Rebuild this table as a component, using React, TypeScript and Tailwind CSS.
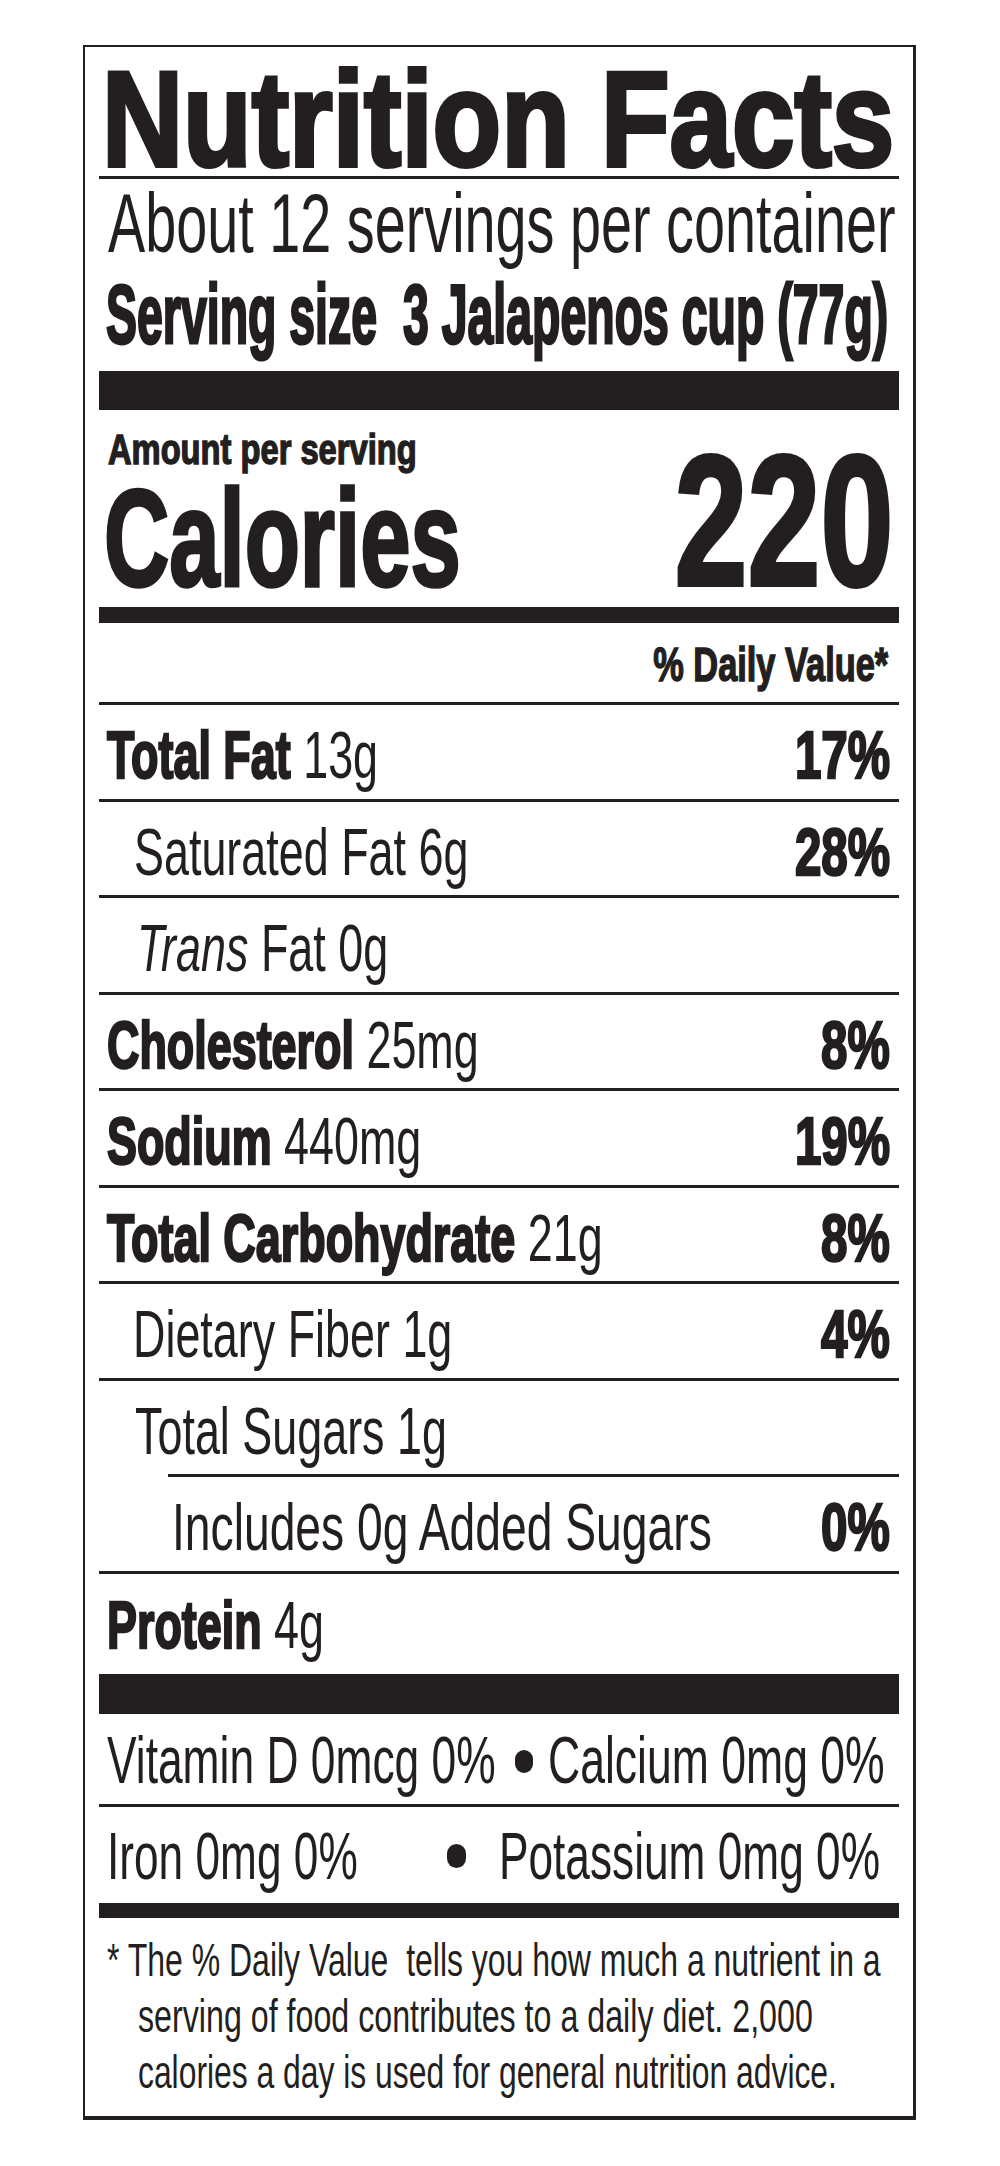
import React from "react";

type Row = {
  b?: string;
  r?: string;
  it?: boolean;
  p?: string;
  pad: string;
  wide?: boolean;
  ruleIndent?: boolean;
};

const rows: Row[] = [
  { b: "Total Fat", r: "13g", p: "17%", pad: "pl-[8px]" },
  { r: "Saturated Fat 6g", p: "28%", pad: "pl-[35px]" },
  { it: true, r: "Fat 0g", pad: "pl-[38px]" },
  { b: "Cholesterol", r: "25mg", p: "8%", pad: "pl-[8px]" },
  { b: "Sodium", r: "440mg", p: "19%", pad: "pl-[8px]" },
  { b: "Total Carbohydrate", r: "21g", p: "8%", pad: "pl-[8px]" },
  { r: "Dietary Fiber 1g", p: "4%", pad: "pl-[34px]" },
  { r: "Total Sugars 1g", pad: "pl-[36px]", ruleIndent: true },
  { r: "Includes 0g Added Sugars", p: "0%", pad: "pl-[73px]", wide: true },
];

function NutrientRow({ row }: { row: Row }) {
  return (
    <>
      <div
        className={`flex h-[93.5px] justify-between pt-[26px] pr-[9px] text-[67px] leading-[48px] ${row.pad}`}
      >
        <div className="min-w-0 flex-1 whitespace-nowrap">
          <span
            className={`inline-block origin-left ${row.wide ? "scale-x-[0.69]" : "scale-x-[0.67]"}`}
          >
            {row.b && (
              <span className="font-bold [-webkit-text-stroke:2.5px_#231f20]">{row.b}&nbsp;</span>
            )}
            {row.it && <span className="italic">Trans </span>}
            {row.r}
          </span>
        </div>
        {row.p && (
          <span className="inline-block shrink-0 origin-right scale-x-[0.71] whitespace-nowrap font-bold [-webkit-text-stroke:2.5px_#231f20]">
            {row.p}
          </span>
        )}
      </div>
      <div className={`h-[3px] bg-[#231f20] ${row.ruleIndent ? "ml-[69px]" : ""}`} />
    </>
  );
}

export default function App() {
  return (
    <div className="min-h-[2166px] w-[1000px] overflow-hidden bg-white pl-[83px] pt-[45px] font-['Liberation_Sans',Arial,sans-serif] text-[#231f20]">
      <div className="w-[833px] border-t-2 border-r-[3px] border-b-4 border-l-2 border-[#231f20] px-[14px] pb-[16px]">
        {/* Title */}
        <div className="h-[127px] whitespace-nowrap pl-[3px] pt-[33px] text-[112.3px] leading-[94px] font-bold">
          <span className="inline-block origin-[0_86px] scale-y-[1.202] [-webkit-text-stroke:3.5px_#231f20]">
            Nutrition Facts
          </span>
        </div>
        <div className="mt-[2px] h-[3px] bg-[#231f20]" />

        {/* Servings */}
        <div className="h-[90px] whitespace-nowrap pl-[9px] text-[83px] leading-[90px]">
          <span className="inline-block origin-left scale-x-[0.672]">About 12 servings per container</span>
        </div>
        <div className="h-[90px] whitespace-pre pl-[7px] text-[84px] leading-[90px] font-bold">
          <span className="inline-block origin-left scale-x-[0.553] [-webkit-text-stroke:3px_#231f20]">
            {"Serving size  3 Jalapenos cup (77g)"}
          </span>
        </div>
        <div className="mt-[12px] h-[39px] bg-[#231f20]" />

        {/* Calories */}
        <div className="flex h-[197px] items-end justify-between">
          <div className="min-w-0 flex-1">
            <div className="h-[40px] whitespace-nowrap pl-[9px] text-[43px] leading-[40px] font-bold">
              <span className="inline-block origin-left scale-x-[0.76] [-webkit-text-stroke:1.5px_#231f20]">
                Amount per serving
              </span>
            </div>
            <div className="h-[138px] whitespace-nowrap pl-[5px] text-[138px] leading-[138px] font-bold">
              <span className="inline-block origin-left scale-x-[0.655] [-webkit-text-stroke:3.5px_#231f20]">
                Calories
              </span>
            </div>
          </div>
          <div className="h-[173px] shrink-0 whitespace-nowrap pr-[6px] text-[186px] leading-[173px] font-bold">
            <span className="inline-block origin-right scale-x-[0.705] [-webkit-text-stroke:4px_#231f20]">220</span>
          </div>
        </div>
        <div className="h-[16px] bg-[#231f20]" />

        {/* Daily value header */}
        <div className="h-[77px] whitespace-nowrap pr-[11px] pt-[7px] text-right text-[48px] leading-[70px] font-bold">
          <span className="inline-block origin-right scale-x-[0.716] [-webkit-text-stroke:1.5px_#231f20]">
            % Daily Value*
          </span>
        </div>
        <div className="mt-[2px] h-[3px] bg-[#231f20]" />

        {rows.map((row, i) => (
          <NutrientRow key={i} row={row} />
        ))}

        {/* Protein */}
        <div className="h-[100px] whitespace-nowrap pl-[8px] pt-[27px] text-[67px] leading-[48px]">
          <span className="inline-block origin-left scale-x-[0.67]">
            <span className="font-bold [-webkit-text-stroke:2.5px_#231f20]">Protein&nbsp;</span>4g
          </span>
        </div>
        <div className="h-[40px] bg-[#231f20]" />

        {/* Vitamins */}
        <div className="flex h-[90px] items-start whitespace-nowrap pl-[8px] pt-[22px] text-[66px] leading-[48px]">
          <div className="w-[408px] shrink-0">
            <span className="inline-block origin-left scale-x-[0.672]">Vitamin D 0mcg 0%</span>
          </div>
          <span className="mt-[14px] h-[23px] w-[18px] shrink-0 rounded-full bg-[#231f20]" />
          <div className="ml-[15px] min-w-0 flex-1">
            <span className="inline-block origin-left scale-x-[0.675]">Calcium 0mg 0%</span>
          </div>
        </div>
        <div className="h-[3px] bg-[#231f20]" />
        <div className="flex h-[96px] items-start whitespace-nowrap pl-[8px] pt-[25px] text-[66px] leading-[48px]">
          <div className="w-[340px] shrink-0">
            <span className="inline-block origin-left scale-x-[0.67]">Iron 0mg 0%</span>
          </div>
          <span className="mt-[12px] h-[24px] w-[19px] shrink-0 rounded-full bg-[#231f20]" />
          <div className="ml-[33px] min-w-0 flex-1">
            <span className="inline-block origin-left scale-x-[0.67]">Potassium 0mg 0%</span>
          </div>
        </div>
        <div className="h-[15px] bg-[#231f20]" />

        {/* Footnote */}
        <div className="whitespace-pre pt-[14px] text-[46px] leading-[56px]">
          <div className="pl-[8px]">
            <span className="inline-block origin-left scale-x-[0.695]">
              {"* The % Daily Value  tells you how much a nutrient in a"}
            </span>
          </div>
          <div className="pl-[39px]">
            <span className="inline-block origin-left scale-x-[0.70]">
              serving of food contributes to a daily diet. 2,000
            </span>
          </div>
          <div className="pl-[39px]">
            <span className="inline-block origin-left scale-x-[0.692]">
              calories a day is used for general nutrition advice.
            </span>
          </div>
        </div>
      </div>
    </div>
  );
}
